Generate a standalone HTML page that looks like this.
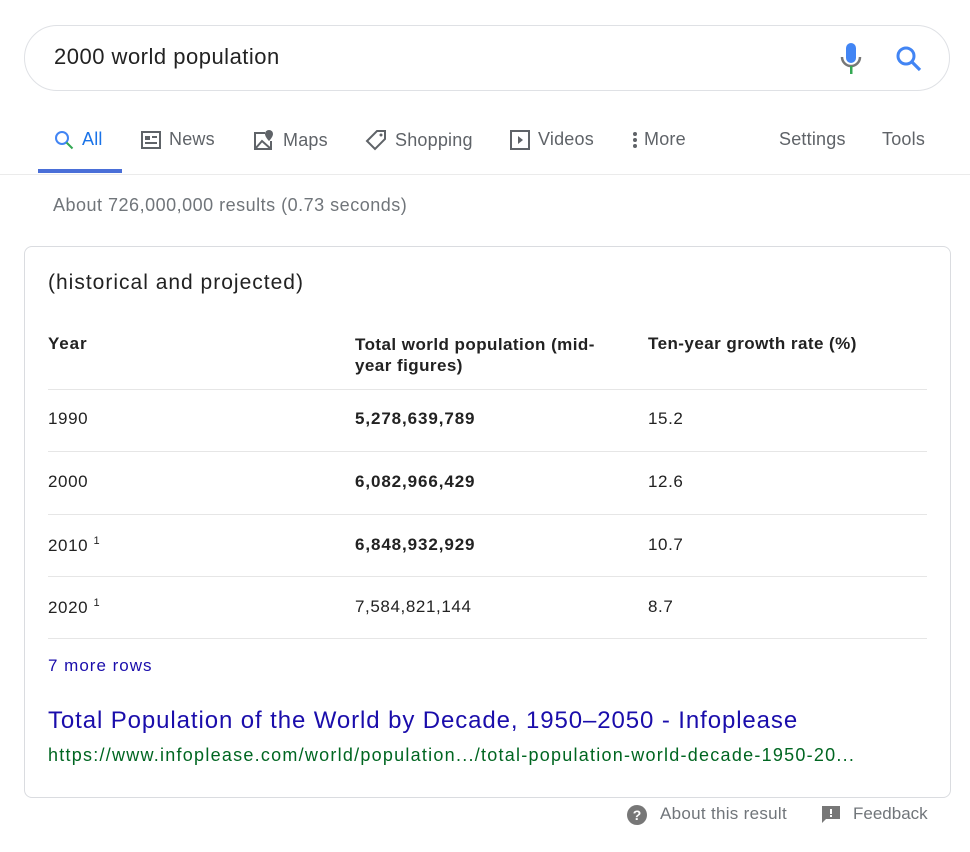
<!DOCTYPE html>
<html><head><meta charset="utf-8"><style>
*{margin:0;padding:0;box-sizing:border-box}
body{width:970px;height:852px;background:#fff;font-family:"Liberation Sans",Arial,sans-serif;position:relative;overflow:hidden;color:#222}
.abs{position:absolute;white-space:nowrap}
.search{position:absolute;left:24px;top:25px;width:926px;height:66px;border:1px solid #dfe1e5;border-radius:33px}
.tab{position:absolute;top:129px;font-size:18px;color:#5f6368;display:flex;align-items:center;gap:8px;letter-spacing:0.2px}
.row{position:absolute;left:24px;width:903px;border-top:1px solid #e6e6e6}
.cell{position:absolute;font-size:17px;color:#222;letter-spacing:0.6px}
b{font-weight:bold;letter-spacing:0.9px}
sup{font-size:11px;vertical-align:7px}
</style></head><body>
<div class="search"></div>
<div class="abs" style="left:54px;top:44px;font-size:22px;color:#222;letter-spacing:0.5px">2000 world population</div>
<svg class="abs" style="left:840px;top:43px" width="22" height="32" viewBox="0 0 22 32"><rect x="6" y="0" width="10" height="20" rx="5" fill="#4285f4"/><path d="M2 14a9 9 0 0 0 18 0" stroke="#777" stroke-width="2.5" fill="none"/><rect x="10" y="23" width="2.5" height="8" fill="#34a853"/></svg>
<svg class="abs" style="left:895px;top:45px" width="28" height="28" viewBox="0 0 28 28"><circle cx="11" cy="11" r="8" stroke="#4285f4" stroke-width="3" fill="none"/><path d="M17 17l8 8" stroke="#4285f4" stroke-width="3.2"/></svg>

<div class="tab" style="left:54px;color:#1a73e8"><svg width="20" height="20" viewBox="0 0 20 20"><circle cx="8" cy="8" r="6" stroke="#4285f4" stroke-width="2" fill="none"/><path d="M12.5 12.5l6 6" stroke="#34a853" stroke-width="2"/></svg>All</div>
<div class="abs" style="left:38px;top:169px;width:84px;height:4px;background:#4a6fd8"></div>
<div class="tab" style="left:141px"><svg width="20" height="18" viewBox="0 0 20 18"><rect x="1" y="1" width="18" height="16" stroke="#5f6368" stroke-width="2" fill="none"/><rect x="4" y="5" width="5" height="4" fill="#5f6368"/><rect x="11" y="5" width="5" height="2" fill="#5f6368"/><rect x="4" y="11" width="12" height="2" fill="#5f6368"/></svg>News</div>
<div class="tab" style="left:253px"><svg width="22" height="22" viewBox="0 0 22 22"><path d="M12 4H2v16h16v-8" stroke="#5f6368" stroke-width="2" fill="none"/><path d="M2 20l7-8 9 8" stroke="#5f6368" stroke-width="2" fill="none"/><path d="M16 1a4 4 0 0 1 4 4c0 3-4 7-4 7s-4-4-4-7a4 4 0 0 1 4-4z" fill="#5f6368"/></svg>Maps</div>
<div class="tab" style="left:365px"><svg width="22" height="22" viewBox="0 0 22 22"><path d="M12 2h8v8L10 20 2 12z" stroke="#5f6368" stroke-width="2" fill="none"/><circle cx="16" cy="6" r="1.5" fill="#5f6368"/></svg>Shopping</div>
<div class="tab" style="left:510px"><svg width="20" height="20" viewBox="0 0 20 20"><rect x="1" y="1" width="18" height="18" stroke="#5f6368" stroke-width="2" fill="none"/><path d="M8 6l5 4-5 4z" fill="#5f6368"/></svg>Videos</div>
<div class="tab" style="left:632px;gap:6px"><svg width="6" height="18" viewBox="0 0 6 18"><circle cx="3" cy="3" r="2" fill="#5f6368"/><circle cx="3" cy="9" r="2" fill="#5f6368"/><circle cx="3" cy="15" r="2" fill="#5f6368"/></svg>More</div>
<div class="tab" style="left:779px">Settings</div>
<div class="tab" style="left:882px">Tools</div>
<div class="abs" style="left:0;top:174px;width:970px;height:1px;background:#ebebeb"></div>

<div class="abs" style="left:53px;top:195px;font-size:18px;color:#70757a;letter-spacing:0.5px">About 726,000,000 results (0.73 seconds)</div>

<div class="abs" style="left:24px;top:246px;width:927px;height:552px;border:1px solid #dadce0;border-radius:8px"></div>
<div class="abs" style="left:48px;top:271px;font-size:21px;color:#222;letter-spacing:1px">(historical and projected)</div>
<div class="cell" style="left:48px;top:334px"><b>Year</b></div>
<div class="cell" style="left:355px;top:334px;line-height:21px;white-space:normal;width:250px"><b style="letter-spacing:0.45px">Total world population (mid-year figures)</b></div>
<div class="cell" style="left:648px;top:334px"><b style="letter-spacing:0.45px">Ten-year growth rate (%)</b></div>
<div class="row" style="left:48px;width:879px;top:389px"></div>
<div class="cell" style="left:48px;top:409px">1990</div><div class="cell" style="left:355px;top:409px"><b>5,278,639,789</b></div><div class="cell" style="left:648px;top:409px">15.2</div>
<div class="row" style="left:48px;width:879px;top:451px"></div>
<div class="cell" style="left:48px;top:472px">2000</div><div class="cell" style="left:355px;top:472px"><b>6,082,966,429</b></div><div class="cell" style="left:648px;top:472px">12.6</div>
<div class="row" style="left:48px;width:879px;top:514px"></div>
<div class="cell" style="left:48px;top:535px">2010 <sup>1</sup></div><div class="cell" style="left:355px;top:535px"><b>6,848,932,929</b></div><div class="cell" style="left:648px;top:535px">10.7</div>
<div class="row" style="left:48px;width:879px;top:576px"></div>
<div class="cell" style="left:48px;top:597px">2020 <sup>1</sup></div><div class="cell" style="left:355px;top:597px">7,584,821,144</div><div class="cell" style="left:648px;top:597px">8.7</div>
<div class="row" style="left:48px;width:879px;top:638px"></div>
<div class="cell" style="left:48px;top:656px;color:#1a0dab;letter-spacing:1px">7 more rows</div>
<div class="abs" style="left:48px;top:707px;font-size:24px;color:#1a0dab;letter-spacing:0.9px">Total Population of the World by Decade, 1950–2050 - Infoplease</div>
<div class="abs" style="left:48px;top:745px;font-size:18px;color:#006621;letter-spacing:1.25px">https://www.infoplease.com/world/population.../total-population-world-decade-1950-20...</div>

<svg class="abs" style="left:627px;top:805px" width="20" height="20" viewBox="0 0 20 20"><circle cx="10" cy="10" r="10" fill="#777"/><text x="10" y="15" font-size="14" font-weight="bold" fill="#fff" text-anchor="middle" font-family="Liberation Sans">?</text></svg>
<div class="abs" style="left:660px;top:804px;font-size:17px;color:#70757a;letter-spacing:0.3px">About this result</div>
<svg class="abs" style="left:822px;top:806px" width="18" height="18" viewBox="0 0 18 18"><path d="M0 0h18v13H4l-4 4z" fill="#777"/><rect x="8" y="3" width="2" height="5" fill="#fff"/><rect x="8" y="9" width="2" height="2" fill="#fff"/></svg>
<div class="abs" style="left:853px;top:804px;font-size:17px;color:#70757a">Feedback</div>
</body></html>
